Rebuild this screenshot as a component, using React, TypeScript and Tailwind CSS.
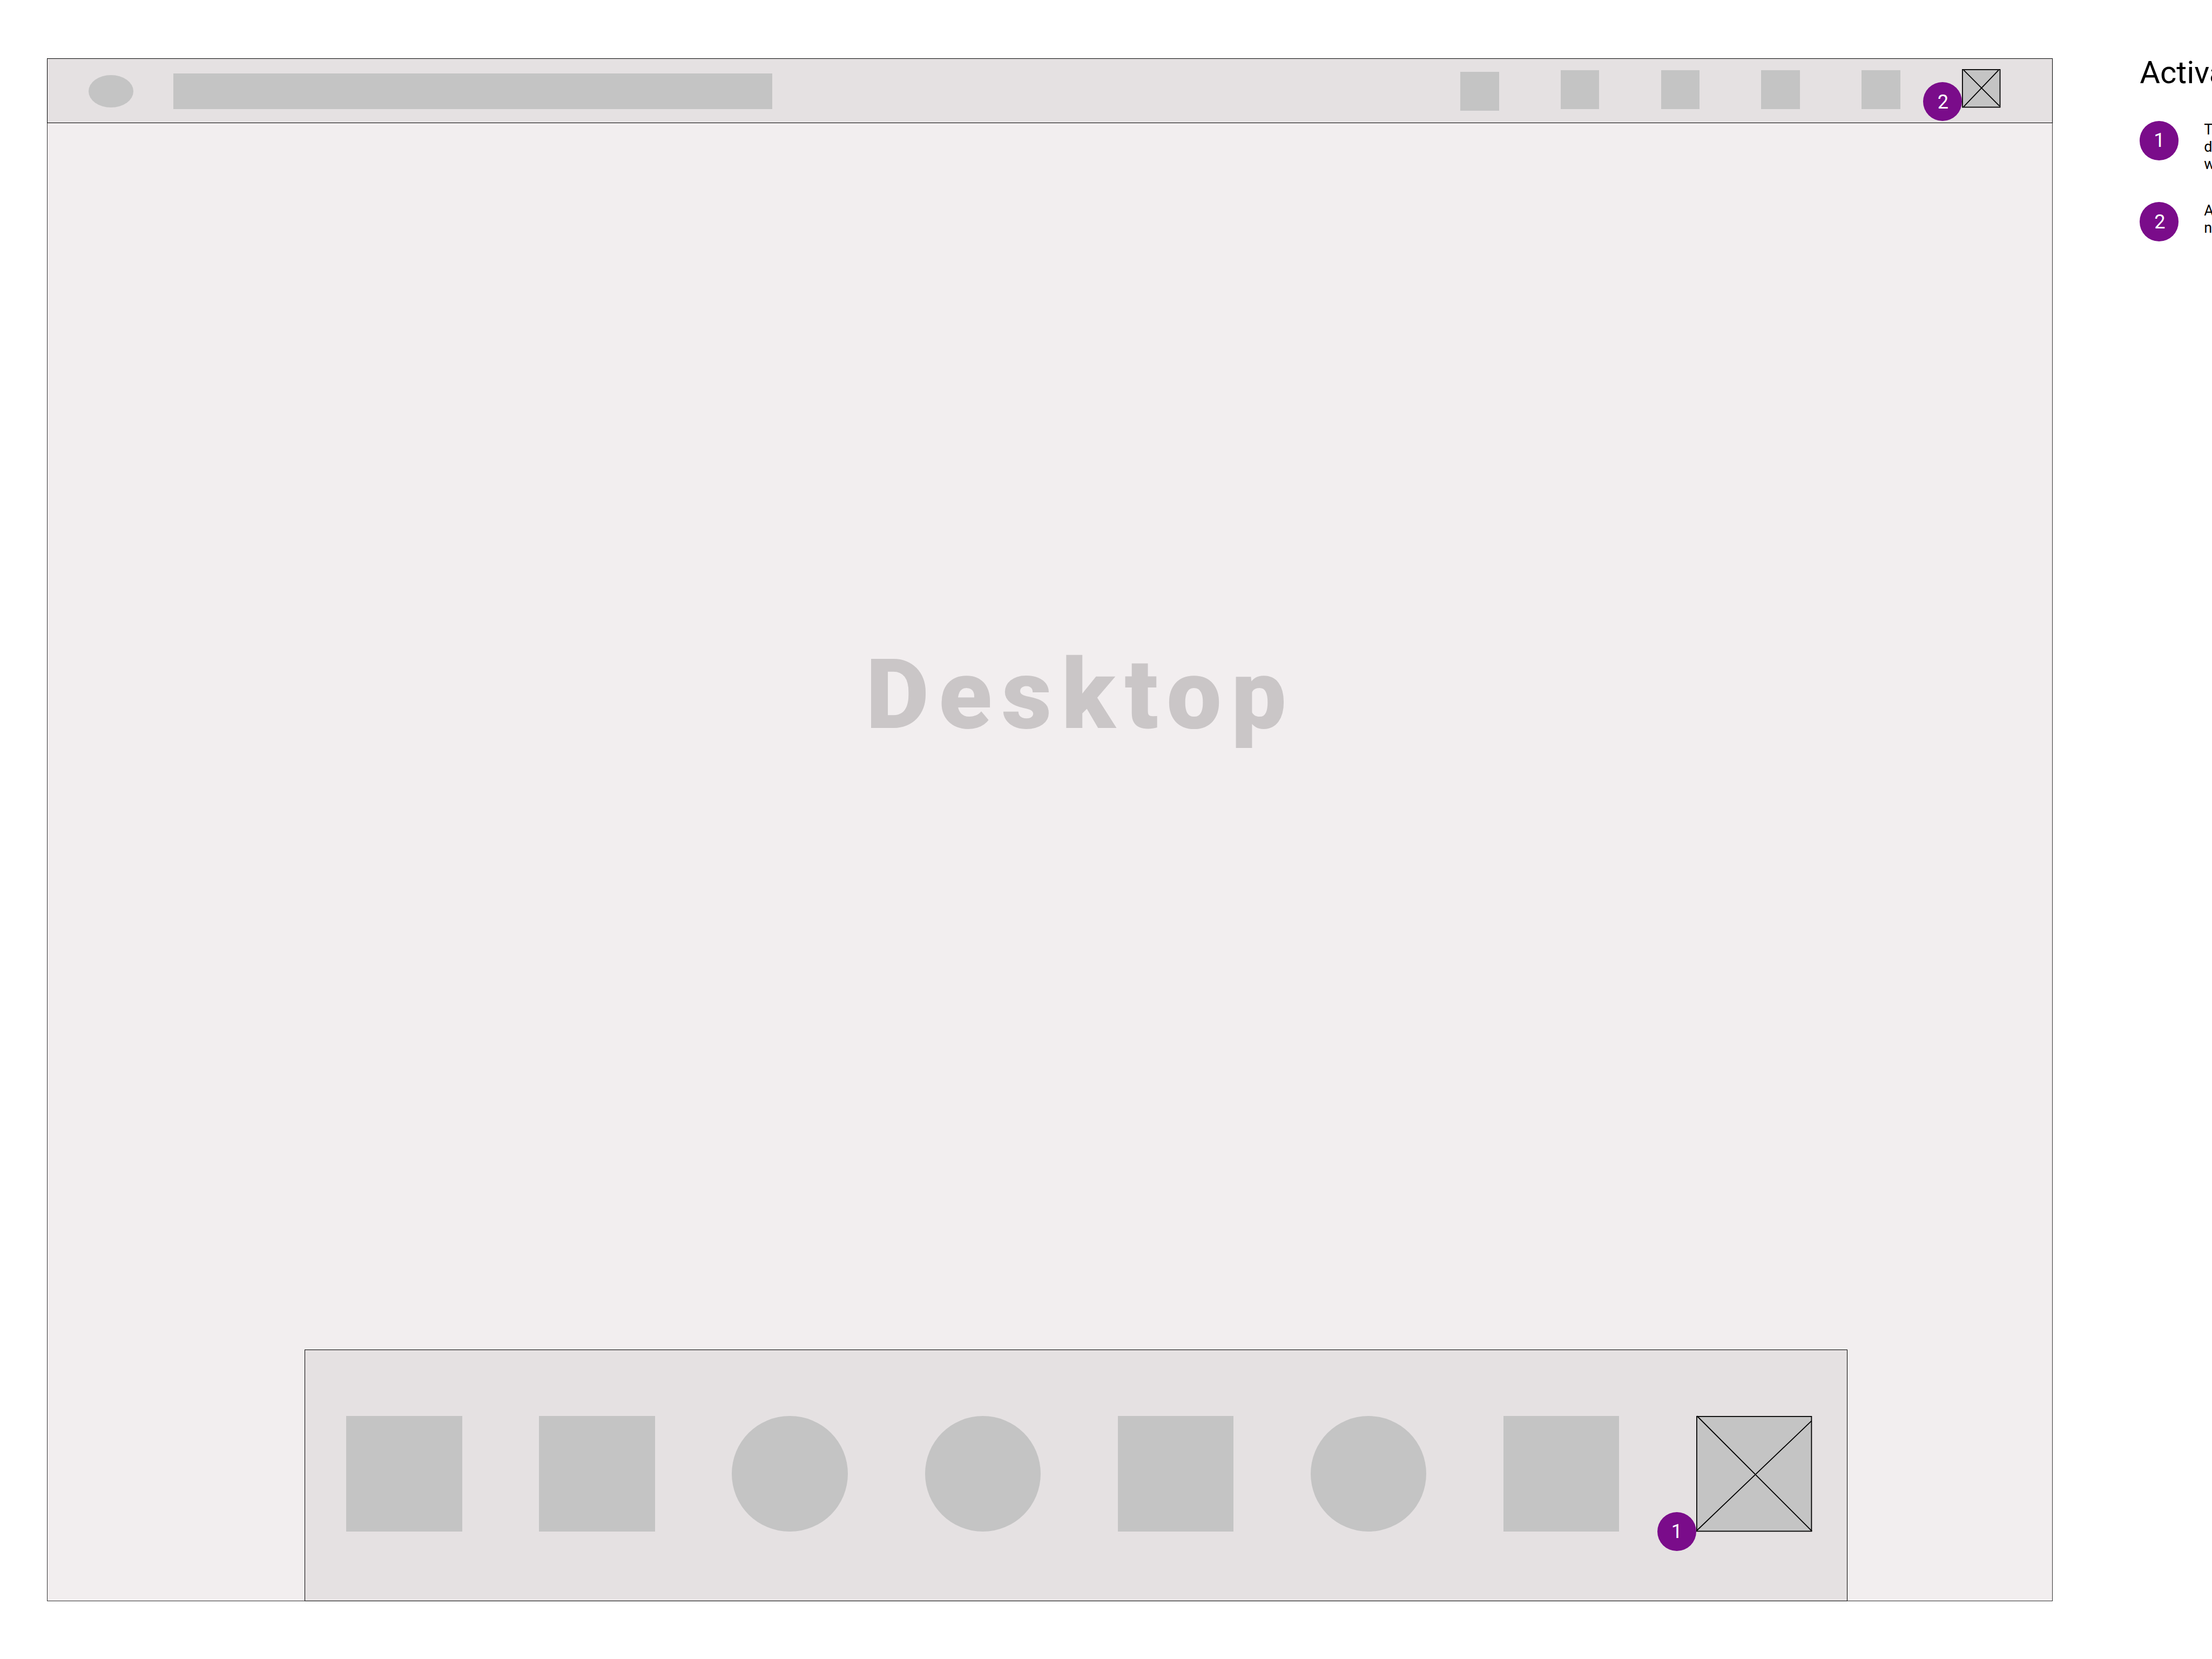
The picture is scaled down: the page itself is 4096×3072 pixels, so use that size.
import React from 'react';

const headerItems = [1, 2, 3, 4];

const dockItems = ['square', 'square', 'circle', 'circle', 'square', 'circle', 'square'];

const Badge = ({ label, className = '' }: { label: string; className?: string }) => {
  return (
    <div
      className={`flex h-[72.3px] w-[72.3px] shrink-0 items-center justify-center rounded-full bg-[#7a0c8a] text-[36.17px] leading-none text-white ${className}`}
    >
      <span className={label === '1' ? '-mt-px' : 'mt-[2px] ml-[2px]'}>{label}</span>
    </div>
  );
};

const Header = () => {
  return (
    <header className="-mx-px -mt-px flex h-[120px] shrink-0 items-start border border-black bg-[#e5e1e2]">
      <div className="mt-[30px] ml-[76px] h-[60px] w-[83px] rounded-[50%] bg-[#c4c4c4]" />
      <div className="mt-[27px] ml-[74px] h-[66px] w-[1109px] bg-[#c4c4c4]" />
      <div className="mr-[95.6px] ml-auto flex items-start gap-[114.4px]">
        <div className="mt-[24.4px] h-[71.4px] w-[71.4px] bg-[#c4c4c4]" />
        {headerItems.map((item) => (
          <div key={item} className="mt-[21.4px] h-[71.4px] w-[71.4px] bg-[#c4c4c4]" />
        ))}
        <div className="relative mt-[18.5px] h-[71.4px] w-[71.4px]">
          <svg viewBox="0 0 79 79" className="h-full w-full overflow-visible" stroke="black" strokeWidth="2">
            <rect x="1" y="1" width="77" height="77" fill="#c4c4c4" />
            <path d="M3.6 2L76.7 75.5M75 2L3.2 77.3" />
          </svg>
          <Badge label="2" className="absolute top-[24.4px] right-full" />
        </div>
      </div>
    </header>
  );
};

const Dock = () => {
  return (
    <footer className="-mb-px ml-[476px] flex h-[466px] w-[2857px] shrink-0 items-start gap-[142.8px] border border-black bg-[#e5e1e2] pt-[121.5px] pl-[76.3px]">
      {dockItems.map((shape, index) => (
        <div
          key={index}
          className={`h-[214.3px] w-[214.3px] shrink-0 bg-[#c4c4c4] ${shape === 'circle' ? 'rounded-full' : ''}`}
        />
      ))}
      <div className="relative h-[214.3px] w-[214.3px] shrink-0">
        <svg viewBox="0 0 237 237" className="h-full w-full overflow-visible" stroke="black" strokeWidth="2">
          <rect x="1" y="1" width="235" height="235" fill="#c4c4c4" />
          <path d="M1.5 0L237 236M236 10L0.7 235" />
        </svg>
        <Badge label="1" className="absolute top-[178.6px] right-full" />
      </div>
    </footer>
  );
};

const Note = ({ label, lines }: { label: string; lines: string[] }) => {
  return (
    <li className="flex h-[150.1px] items-start">
      <Badge label={label} />
      <div className="mt-px ml-[46.8px] text-[27.125px] leading-[31.65px]">
        {lines.map((line) => (
          <p key={line}>{line}</p>
        ))}
      </div>
    </li>
  );
};

const App = () => {
  return (
    <div className="flex h-[3072px] w-[4096px] items-start overflow-hidden bg-white font-['Roboto',sans-serif] text-black">
      <main className="mt-[108px] ml-[87px] flex h-[2857px] w-[3714px] shrink-0 flex-col border border-[#333] bg-[#f2eeef]">
        <Header />
        <div className="flex flex-1 justify-center pt-[968px] pl-[115px]">
          <h1 className="text-[180.84px] leading-none font-black tracking-[0.1em] text-[#cac6c7]">Desktop</h1>
        </div>
        <Dock />
      </main>
      <aside className="mt-[100px] ml-[161.2px] shrink-0">
        <h2 className="text-[57.87px] leading-[68px]">Activa</h2>
        <ul className="mt-[56.3px]">
          <Note label="1" lines={['T', 'd', 'w']} />
          <Note label="2" lines={['A', 'n']} />
        </ul>
      </aside>
    </div>
  );
};

export default App;
